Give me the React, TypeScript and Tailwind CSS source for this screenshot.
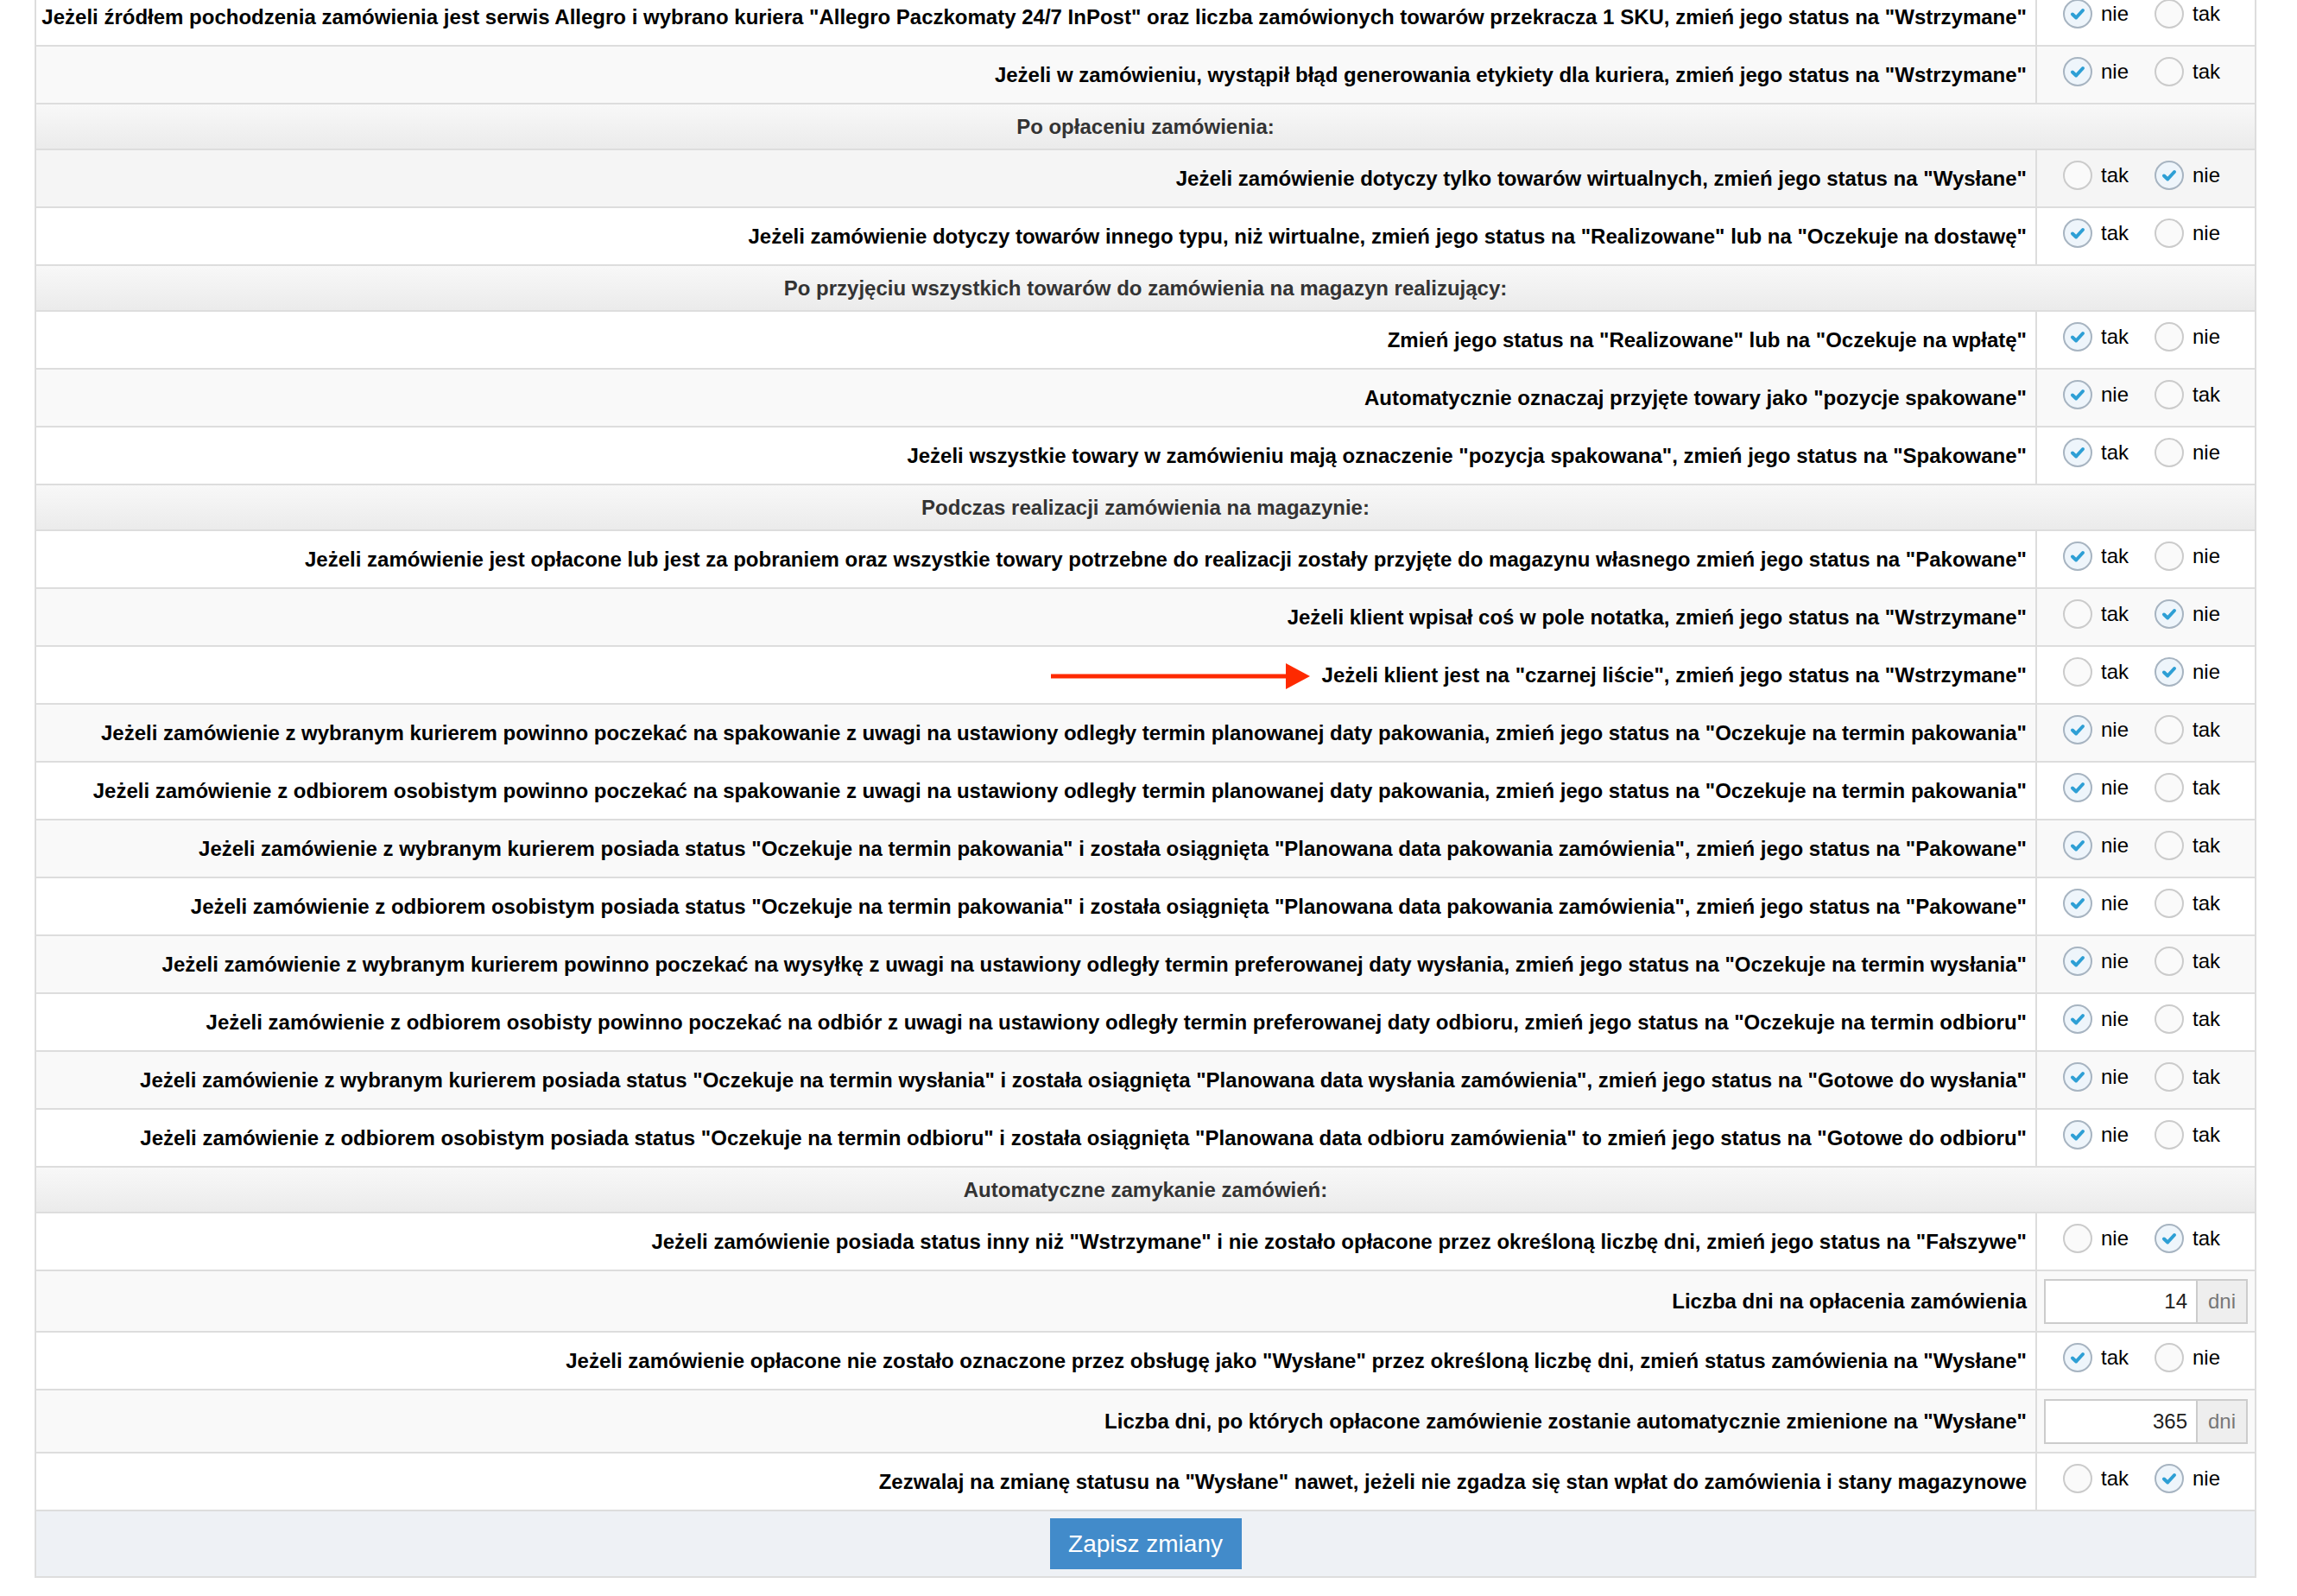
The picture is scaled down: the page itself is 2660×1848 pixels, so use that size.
import React from "react";

type Option = { label: string; checked: boolean };

type Row =
  | { kind: "header"; text: string }
  | { kind: "radio"; text: string; options: Option[]; bg: string; arrow?: boolean }
  | { kind: "input"; text: string; value: string; bg: string; h: string };

const W = "bg-white";
const G = "bg-[#f9f9f9]";

const nieTak = (first: "nie" | "tak", checked: "nie" | "tak"): Option[] => {
  const second = first === "nie" ? "tak" : "nie";
  return [
    { label: first, checked: checked === first },
    { label: second, checked: checked === second },
  ];
};

const rows: Row[] = [
  {
    kind: "radio",
    text: 'Jeżeli źródłem pochodzenia zamówienia jest serwis Allegro i wybrano kuriera "Allegro Paczkomaty 24/7 InPost" oraz liczba zamówionych towarów przekracza 1 SKU, zmień jego status na "Wstrzymane"',
    options: nieTak("nie", "nie"),
    bg: W,
  },
  {
    kind: "radio",
    text: 'Jeżeli w zamówieniu, wystąpił błąd generowania etykiety dla kuriera, zmień jego status na "Wstrzymane"',
    options: nieTak("nie", "nie"),
    bg: G,
  },
  { kind: "header", text: "Po opłaceniu zamówienia:" },
  {
    kind: "radio",
    text: 'Jeżeli zamówienie dotyczy tylko towarów wirtualnych, zmień jego status na "Wysłane"',
    options: nieTak("tak", "nie"),
    bg: "bg-[#f5f5f5]",
  },
  {
    kind: "radio",
    text: 'Jeżeli zamówienie dotyczy towarów innego typu, niż wirtualne, zmień jego status na "Realizowane" lub na "Oczekuje na dostawę"',
    options: nieTak("tak", "tak"),
    bg: W,
  },
  { kind: "header", text: "Po przyjęciu wszystkich towarów do zamówienia na magazyn realizujący:" },
  {
    kind: "radio",
    text: 'Zmień jego status na "Realizowane" lub na "Oczekuje na wpłatę"',
    options: nieTak("tak", "tak"),
    bg: W,
  },
  {
    kind: "radio",
    text: 'Automatycznie oznaczaj przyjęte towary jako "pozycje spakowane"',
    options: nieTak("nie", "nie"),
    bg: G,
  },
  {
    kind: "radio",
    text: 'Jeżeli wszystkie towary w zamówieniu mają oznaczenie "pozycja spakowana", zmień jego status na "Spakowane"',
    options: nieTak("tak", "tak"),
    bg: W,
  },
  { kind: "header", text: "Podczas realizacji zamówienia na magazynie:" },
  {
    kind: "radio",
    text: 'Jeżeli zamówienie jest opłacone lub jest za pobraniem oraz wszystkie towary potrzebne do realizacji zostały przyjęte do magazynu własnego zmień jego status na "Pakowane"',
    options: nieTak("tak", "tak"),
    bg: W,
  },
  {
    kind: "radio",
    text: 'Jeżeli klient wpisał coś w pole notatka, zmień jego status na "Wstrzymane"',
    options: nieTak("tak", "nie"),
    bg: G,
  },
  {
    kind: "radio",
    text: 'Jeżeli klient jest na "czarnej liście", zmień jego status na "Wstrzymane"',
    options: nieTak("tak", "nie"),
    bg: W,
    arrow: true,
  },
  {
    kind: "radio",
    text: 'Jeżeli zamówienie z wybranym kurierem powinno poczekać na spakowanie z uwagi na ustawiony odległy termin planowanej daty pakowania, zmień jego status na "Oczekuje na termin pakowania"',
    options: nieTak("nie", "nie"),
    bg: G,
  },
  {
    kind: "radio",
    text: 'Jeżeli zamówienie z odbiorem osobistym powinno poczekać na spakowanie z uwagi na ustawiony odległy termin planowanej daty pakowania, zmień jego status na "Oczekuje na termin pakowania"',
    options: nieTak("nie", "nie"),
    bg: W,
  },
  {
    kind: "radio",
    text: 'Jeżeli zamówienie z wybranym kurierem posiada status "Oczekuje na termin pakowania" i została osiągnięta "Planowana data pakowania zamówienia", zmień jego status na "Pakowane"',
    options: nieTak("nie", "nie"),
    bg: G,
  },
  {
    kind: "radio",
    text: 'Jeżeli zamówienie z odbiorem osobistym posiada status "Oczekuje na termin pakowania" i została osiągnięta "Planowana data pakowania zamówienia", zmień jego status na "Pakowane"',
    options: nieTak("nie", "nie"),
    bg: W,
  },
  {
    kind: "radio",
    text: 'Jeżeli zamówienie z wybranym kurierem powinno poczekać na wysyłkę z uwagi na ustawiony odległy termin preferowanej daty wysłania, zmień jego status na "Oczekuje na termin wysłania"',
    options: nieTak("nie", "nie"),
    bg: G,
  },
  {
    kind: "radio",
    text: 'Jeżeli zamówienie z odbiorem osobisty powinno poczekać na odbiór z uwagi na ustawiony odległy termin preferowanej daty odbioru, zmień jego status na "Oczekuje na termin odbioru"',
    options: nieTak("nie", "nie"),
    bg: W,
  },
  {
    kind: "radio",
    text: 'Jeżeli zamówienie z wybranym kurierem posiada status "Oczekuje na termin wysłania" i została osiągnięta "Planowana data wysłania zamówienia", zmień jego status na "Gotowe do wysłania"',
    options: nieTak("nie", "nie"),
    bg: G,
  },
  {
    kind: "radio",
    text: 'Jeżeli zamówienie z odbiorem osobistym posiada status "Oczekuje na termin odbioru" i została osiągnięta "Planowana data odbioru zamówienia" to zmień jego status na "Gotowe do odbioru"',
    options: nieTak("nie", "nie"),
    bg: W,
  },
  { kind: "header", text: "Automatyczne zamykanie zamówień:" },
  {
    kind: "radio",
    text: 'Jeżeli zamówienie posiada status inny niż "Wstrzymane" i nie zostało opłacone przez określoną liczbę dni, zmień jego status na "Fałszywe"',
    options: nieTak("nie", "tak"),
    bg: W,
  },
  { kind: "input", text: "Liczba dni na opłacenia zamówienia", value: "14", bg: G, h: "h-[71px]" },
  {
    kind: "radio",
    text: 'Jeżeli zamówienie opłacone nie zostało oznaczone przez obsługę jako "Wysłane" przez określoną liczbę dni, zmień status zamówienia na "Wysłane"',
    options: nieTak("tak", "tak"),
    bg: W,
  },
  {
    kind: "input",
    text: 'Liczba dni, po których opłacone zamówienie zostanie automatycznie zmienione na "Wysłane"',
    value: "365",
    bg: G,
    h: "h-[73px]",
  },
  {
    kind: "radio",
    text: 'Zezwalaj na zmianę statusu na "Wysłane" nawet, jeżeli nie zgadza się stan wpłat do zamówienia i stany magazynowe',
    options: nieTak("tak", "nie"),
    bg: W,
  },
];

const RadioDot = ({ checked }: { checked: boolean }) => (
  <span
    className={
      checked
        ? "flex h-[34px] w-[34px] items-center justify-center rounded-full border-2 border-[#a7b4c1] bg-[#eef5fb]"
        : "flex h-[34px] w-[34px] items-center justify-center rounded-full border-2 border-[#cbcbcb] bg-[#fafafa]"
    }
  >
    {checked && (
      <svg width="20" height="20" viewBox="0 0 20 20">
        <path d="M4 10.5 L8.2 14.5 L16 6" fill="none" stroke="#2d9fd5" strokeWidth="4" strokeLinecap="round" strokeLinejoin="round" />
      </svg>
    )}
  </span>
);

const Arrow = () => (
  <svg className="absolute left-[1175px] top-[19px]" width="310" height="30" viewBox="0 0 310 30">
    <rect x="0" y="12.5" width="275" height="5" fill="#fe2a00" />
    <polygon points="272,0 300,15 272,30" fill="#fe2a00" />
  </svg>
);

export default function App() {
  return (
    <div className="min-h-screen bg-white font-['Liberation_Sans',Arial,sans-serif] text-black">
      <div className="-mt-[13px] ml-[40px] w-[2573px] border-x-2 border-[#dddddd]">
        {rows.map((row, i) => {
          if (row.kind === "header") {
            return (
              <div
                key={i}
                className="flex h-[53px] items-center justify-center border-b-2 border-[#dddddd] bg-gradient-to-b from-[#f8f8f8] to-[#ebebeb] text-[24px] font-bold text-[#333333]"
              >
                {row.text}
              </div>
            );
          }
          if (row.kind === "input") {
            return (
              <div key={i} className={`flex ${row.h} border-b-2 border-[#dddddd] ${row.bg}`}>
                <div className="flex flex-1 items-center justify-end whitespace-nowrap border-r-2 border-[#dddddd] pr-[10px] text-[24px] font-bold">
                  {row.text}
                </div>
                <div className="flex w-[252px] items-center px-[8px]">
                  <div className="flex h-[52px] w-full border-2 border-[#cccccc] bg-white">
                    <div className="flex flex-1 items-center justify-end pr-[10px] text-[24px] text-[#222222]">{row.value}</div>
                    <div className="flex w-[58px] items-center justify-center border-l-2 border-[#cccccc] bg-[#eeeeee] text-[24px] text-[#777777]">
                      dni
                    </div>
                  </div>
                </div>
              </div>
            );
          }
          return (
            <div key={i} className={`relative flex h-[67px] border-b-2 border-[#dddddd] ${row.bg}`}>
              {row.arrow && <Arrow />}
              <div className="flex flex-1 items-center justify-end whitespace-nowrap border-r-2 border-[#dddddd] pr-[10px] text-[24px] font-bold">
                {row.text}
              </div>
              <div className="flex w-[252px] items-start pl-[30px] pt-[11px]">
                {row.options.map((opt) => (
                  <div key={opt.label} className="flex w-[106px] items-center gap-[10px] text-[24px]">
                    <RadioDot checked={opt.checked} />
                    <span>{opt.label}</span>
                  </div>
                ))}
              </div>
            </div>
          );
        })}
        <div className="flex h-[77px] items-center justify-center border-b-2 border-[#dddddd] bg-[#eef1f5]">
          <button className="h-[59px] w-[222px] bg-[#428bca] text-[28px] text-white">Zapisz zmiany</button>
        </div>
      </div>
    </div>
  );
}
